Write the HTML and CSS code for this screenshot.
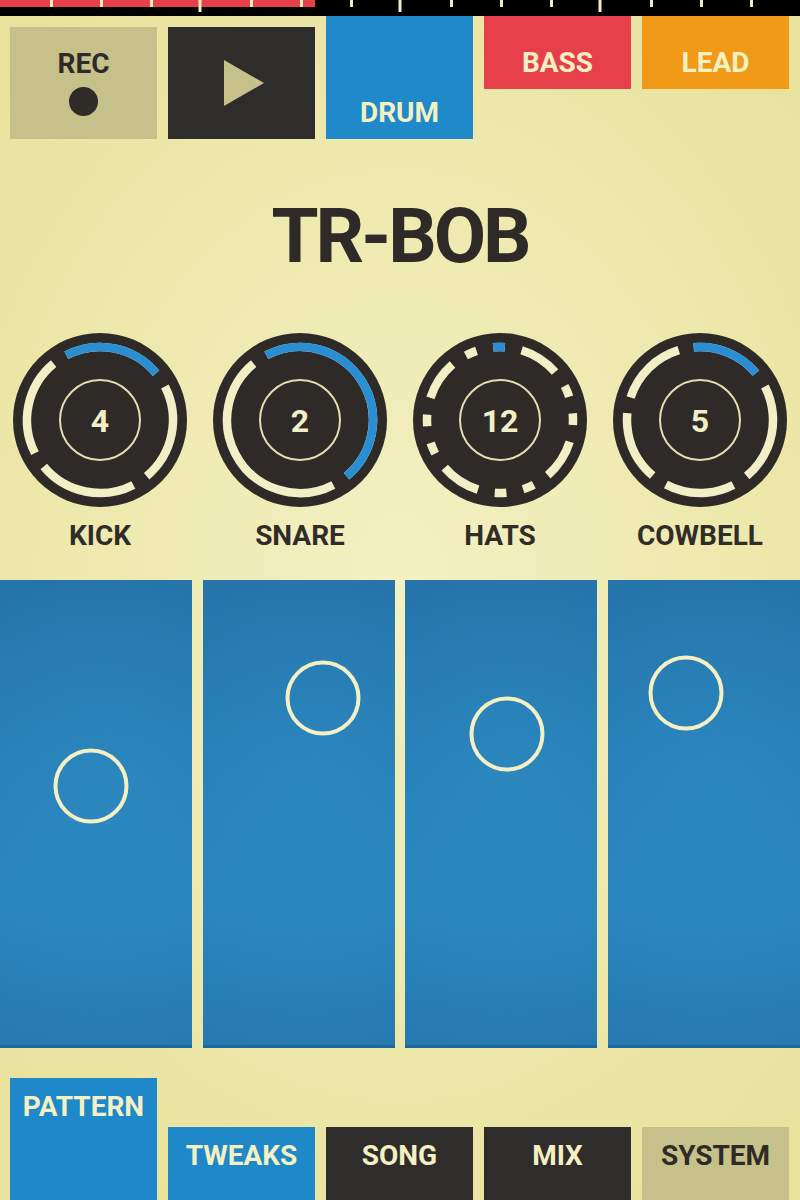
FILE: index.html
```html
<!DOCTYPE html>
<html>
<head>
<meta charset="utf-8">
<title>TR-BOB</title>
<link rel="stylesheet" href="styles.css">
</head>
<body>
<div class="app">
  <div class="timeline">
    <svg width="800" height="16" viewBox="0 0 800 16">
      <rect width="800" height="16" fill="#000"/>
      <rect width="315" height="7" fill="#e8404a"/>
      <g stroke="#f1ecbe" stroke-width="3">
        <line x1="51.5" y1="0" x2="51.5" y2="7"/>
        <line x1="101.5" y1="0" x2="101.5" y2="7"/>
        <line x1="151.5" y1="0" x2="151.5" y2="7"/>
        <line x1="200" y1="0" x2="200" y2="12"/>
        <line x1="251.5" y1="0" x2="251.5" y2="7"/>
        <line x1="301.5" y1="0" x2="301.5" y2="7"/>
        <line x1="351.5" y1="0" x2="351.5" y2="7"/>
        <line x1="400" y1="0" x2="400" y2="12"/>
        <line x1="451.5" y1="0" x2="451.5" y2="7"/>
        <line x1="501.5" y1="0" x2="501.5" y2="7"/>
        <line x1="551.5" y1="0" x2="551.5" y2="7"/>
        <line x1="600" y1="0" x2="600" y2="12"/>
        <line x1="651.5" y1="0" x2="651.5" y2="7"/>
        <line x1="701.5" y1="0" x2="701.5" y2="7"/>
        <line x1="751.5" y1="0" x2="751.5" y2="7"/>
      </g>
    </svg>
  </div>

  <div class="top-row">
    <div class="btn rec"><span class="btn-label">REC</span><span class="rec-dot"></span></div>
    <div class="btn play">
      <svg class="play-icon" width="40" height="46" viewBox="0 0 40 46"><polygon points="0,0 40,23 0,46" fill="#c6c18b"/></svg>
    </div>
    <div class="btn drum">DRUM</div>
    <div class="btn bass">BASS</div>
    <div class="btn lead">LEAD</div>
  </div>

  <h1 class="title">TR-BOB</h1>

  <div class="knobs">
    <div class="knob">
      <svg class="knob-dial" viewBox="-87 -87 174 174">
        <circle r="87" class="dial-body"/>
        <circle r="73" class="dial-ring" stroke-dasharray="98.67 16" transform="rotate(-117.47)"/>
        <circle r="73" class="dial-active" stroke-dasharray="98.67 500" transform="rotate(-117.47)"/>
        <circle r="40" class="dial-inner"/>
        <text y="11.5" class="dial-value">4</text>
      </svg>
      <div class="knob-label">KICK</div>
    </div>
    <div class="knob">
      <svg class="knob-dial" viewBox="-87 -87 174 174">
        <circle r="87" class="dial-body"/>
        <circle r="73" class="dial-ring" stroke-dasharray="213.33 16" transform="rotate(-117.47)"/>
        <circle r="73" class="dial-active" stroke-dasharray="213.33 500" transform="rotate(-117.47)"/>
        <circle r="40" class="dial-inner"/>
        <text y="11.5" class="dial-value">2</text>
      </svg>
      <div class="knob-label">SNARE</div>
    </div>
    <div class="knob">
      <svg class="knob-dial" viewBox="-87 -87 174 174">
        <circle r="87" class="dial-body"/>
        <circle r="73" class="dial-ring" stroke-dasharray="11.67 17 11.67 17 40.33 17" transform="rotate(-117.87)"/>
        <circle r="73" class="dial-active" stroke-dasharray="11.67 500" transform="rotate(-95.37)"/>
        <circle r="40" class="dial-inner"/>
        <text y="11.5" class="dial-value">12</text>
      </svg>
      <div class="knob-label">HATS</div>
    </div>
    <div class="knob">
      <svg class="knob-dial" viewBox="-87 -87 174 174">
        <circle r="87" class="dial-body"/>
        <circle r="73" class="dial-ring" stroke-dasharray="70 16 98.67 16 70 16 70 16 70 16" transform="rotate(-94.97)"/>
        <circle r="73" class="dial-active" stroke-dasharray="70 500" transform="rotate(-94.97)"/>
        <circle r="40" class="dial-inner"/>
        <text y="11.5" class="dial-value">5</text>
      </svg>
      <div class="knob-label">COWBELL</div>
    </div>
  </div>

  <div class="pads">
    <div class="pad"><span class="handle" style="left:91px; top:206px"></span></div>
    <div class="pad"><span class="handle" style="left:120px; top:118px"></span></div>
    <div class="pad"><span class="handle" style="left:102px; top:154px"></span></div>
    <div class="pad"><span class="handle" style="left:78px; top:113px"></span></div>
  </div>

  <div class="nav">
    <div class="tab pattern">PATTERN</div>
    <div class="tab tweaks">TWEAKS</div>
    <div class="tab song">SONG</div>
    <div class="tab mix">MIX</div>
    <div class="tab system">SYSTEM</div>
  </div>
</div>
</body>
</html>
```

FILE: styles.css
```css
* {
  box-sizing: border-box;
  margin: 0;
  padding: 0;
}

html, body {
  width: 800px;
  height: 1200px;
  overflow: hidden;
}

body {
  background: radial-gradient(ellipse 70% 60% at 50% 48%, #f3f0c3 0%, #eee9ae 55%, #e9e29e 100%);
  font-family: Roboto, "Liberation Sans", sans-serif;
  color: #2e2b27;
}

.app {
  width: 800px;
  height: 1200px;
  display: flex;
  flex-direction: column;
}

.timeline {
  height: 16px;
}

.timeline svg {
  display: block;
}

/* top row */
.top-row {
  display: grid;
  grid-template-columns: repeat(5, 147px);
  column-gap: 11px;
  padding: 0 10px;
  height: 123px;
  align-items: start;
}

.btn {
  font-weight: 700;
  font-size: 28px;
  line-height: 28px;
  text-align: center;
  color: #f4f0c4;
}

.rec {
  margin-top: 11px;
  height: 112px;
  background: #c6c18b;
  color: #2e2b27;
  padding-top: 23px;
  display: flex;
  flex-direction: column;
  align-items: center;
}

.rec-dot {
  width: 29px;
  height: 29px;
  border-radius: 50%;
  background: #2e2b29;
  margin-top: 9px;
}

.play {
  margin-top: 11px;
  height: 112px;
  background: #2f2d2b;
  display: flex;
  align-items: center;
  justify-content: center;
  padding-left: 5px;
}

.play-icon {
  display: block;
}

.drum {
  height: 123px;
  background: #2089c9;
  padding-top: 83px;
}

.bass {
  height: 73px;
  background: #e8404a;
  padding-top: 33px;
}

.lead {
  height: 73px;
  background: #f09a17;
  padding-top: 33px;
}

/* title */
.title {
  margin-top: 59px;
  height: 76px;
  font-size: 76px;
  line-height: 76px;
  font-weight: 700;
  text-align: center;
  letter-spacing: -3px;
  color: #2d2a27;
}

/* knobs */
.knobs {
  margin-top: 59px;
  display: grid;
  grid-template-columns: repeat(4, 200px);
}

.knob {
  display: flex;
  flex-direction: column;
  align-items: center;
}

.knob-dial {
  display: block;
  width: 174px;
  height: 174px;
}

.dial-body {
  fill: #2d2a28;
}

.dial-ring {
  fill: none;
  stroke: #f2eec6;
  stroke-width: 8.5;
}

.dial-active {
  fill: none;
  stroke: #2a8ed2;
  stroke-width: 8.5;
}

.dial-inner {
  fill: none;
  stroke: #e2deb0;
  stroke-width: 2;
}

.dial-value {
  fill: #f2eec6;
  font-family: Roboto, "Liberation Sans", sans-serif;
  font-weight: 700;
  font-size: 32px;
  text-anchor: middle;
}

.knob-label {
  margin-top: 15px;
  height: 28px;
  font-size: 28px;
  line-height: 28px;
  font-weight: 700;
  color: #302d29;
}

/* pads */
.pads {
  margin-top: 30px;
  height: 468px;
  display: grid;
  grid-template-columns: repeat(4, 1fr);
  column-gap: 10.5px;
}

.pad {
  position: relative;
  background:
    radial-gradient(ellipse 90% 55% at 55% 50%, rgba(46, 140, 196, 0.6) 0%, rgba(46, 140, 196, 0) 100%),
    linear-gradient(#2574aa, #2780b7 40%, #2985bc 70%, #2679b0);
  box-shadow: inset 0 -3px 0 #1d679b;
}

.handle {
  position: absolute;
  width: 75px;
  height: 75px;
  border: 4px solid #f4f0c4;
  border-radius: 50%;
  transform: translate(-50%, -50%);
}

/* bottom nav */
.nav {
  height: 152px;
  display: grid;
  grid-template-columns: repeat(5, 147px);
  column-gap: 11px;
  padding: 0 10px;
  align-items: end;
}

.tab {
  height: 73px;
  padding-top: 15px;
  font-size: 28px;
  line-height: 28px;
  font-weight: 700;
  text-align: center;
  color: #f4f0c4;
}

.pattern {
  height: 122px;
  background: #1f88c8;
}

.tweaks {
  background: #1f88c8;
}

.song,
.mix {
  background: #2f2d2b;
}

.system {
  background: #c6c08a;
  color: #2e2b27;
}
```
